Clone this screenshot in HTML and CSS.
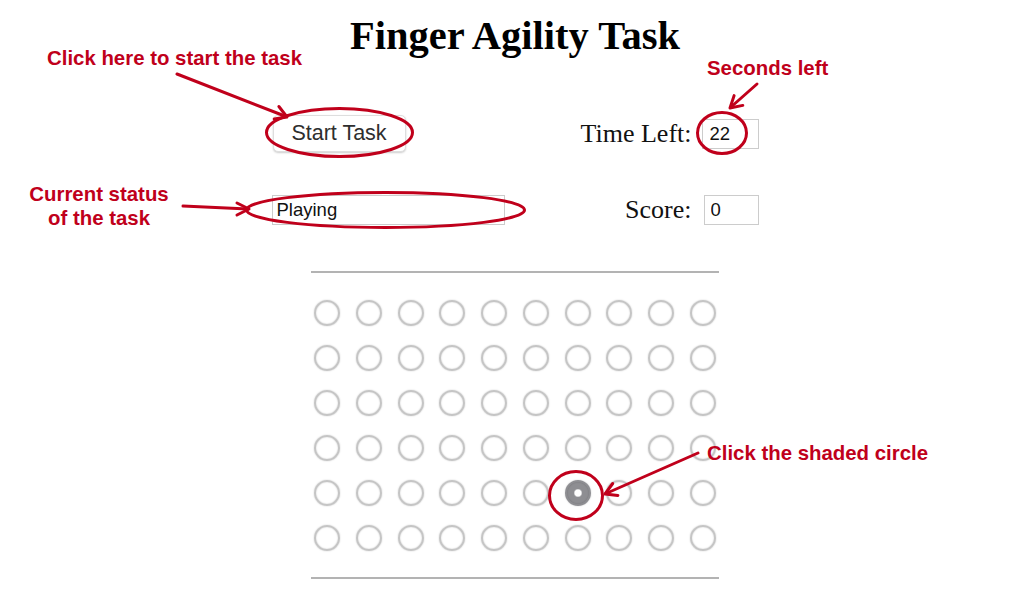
FILE: index.html
```html
<!DOCTYPE html>
<html lang="en">
<head>
<meta charset="utf-8">
<title>Finger Agility Task</title>
<link rel="stylesheet" href="styles.css">
</head>
<body>
<main class="page">
  <h1 class="title">Finger Agility Task</h1>
  <div class="controls">
    <div class="cell"><button class="start-btn" type="button">Start Task</button></div>
    <label class="lbl" for="time">Time Left:</label>
    <div class="cell-right"><input id="time" class="field time" value="22" readonly></div>
    <div class="cell"><input class="status" value="Playing" readonly></div>
    <label class="lbl" for="score">Score:</label>
    <div class="cell-right"><input id="score" class="field score" value="0" readonly></div>
  </div>
  <div class="rule"></div>
  <div class="board">
    <span class="dot"></span><span class="dot"></span><span class="dot"></span><span class="dot"></span><span class="dot"></span><span class="dot"></span><span class="dot"></span><span class="dot"></span><span class="dot"></span><span class="dot"></span>
    <span class="dot"></span><span class="dot"></span><span class="dot"></span><span class="dot"></span><span class="dot"></span><span class="dot"></span><span class="dot"></span><span class="dot"></span><span class="dot"></span><span class="dot"></span>
    <span class="dot"></span><span class="dot"></span><span class="dot"></span><span class="dot"></span><span class="dot"></span><span class="dot"></span><span class="dot"></span><span class="dot"></span><span class="dot"></span><span class="dot"></span>
    <span class="dot"></span><span class="dot"></span><span class="dot"></span><span class="dot"></span><span class="dot"></span><span class="dot"></span><span class="dot"></span><span class="dot"></span><span class="dot"></span><span class="dot"></span>
    <span class="dot"></span><span class="dot"></span><span class="dot"></span><span class="dot"></span><span class="dot"></span><span class="dot"></span><span class="dot active"></span><span class="dot"></span><span class="dot"></span><span class="dot"></span>
    <span class="dot"></span><span class="dot"></span><span class="dot"></span><span class="dot"></span><span class="dot"></span><span class="dot"></span><span class="dot"></span><span class="dot"></span><span class="dot"></span><span class="dot"></span>
  </div>
  <div class="rule"></div>
</main>

<div class="notes">
  <svg class="marks" width="1019" height="596" viewBox="0 0 1019 596" fill="none" stroke="#c0001b" stroke-width="3" stroke-linecap="round" stroke-linejoin="round">
    <ellipse cx="339.5" cy="132.5" rx="73" ry="24"/>
    <ellipse cx="385.5" cy="210" rx="139" ry="17.5"/>
    <ellipse cx="722" cy="133" rx="24.5" ry="20.5"/>
    <ellipse cx="576" cy="495.5" rx="26.5" ry="24"/>
    <line x1="177" y1="74" x2="286" y2="116.5"/>
    <polyline points="278.9,106.5 287,117 274.2,119"/>
    <line x1="183" y1="206" x2="248" y2="209"/>
    <polyline points="237,203 249,209 237,215"/>
    <line x1="757" y1="84" x2="731" y2="107"/>
    <polyline points="742.8,105.4 730,108 734.1,95.6"/>
    <line x1="698" y1="453" x2="606" y2="493.5"/>
    <polyline points="612.7,483.5 605,494 617.9,495.4"/>
  </svg>
  <div class="note note-start">Click here to start the task</div>
  <div class="note note-seconds">Seconds left</div>
  <div class="note note-status">Current status<br>of the task</div>
  <div class="note note-circle">Click the shaded circle</div>
</div>
</body>
</html>
```

FILE: styles.css
```css
html, body {
  margin: 0;
  padding: 0;
  background: #ffffff;
}

body {
  position: relative;
  width: 1019px;
  height: 596px;
  overflow: hidden;
  font-family: "Liberation Serif", "Times New Roman", serif;
  color: #000;
}

.page {
  box-sizing: border-box;
  width: 1019px;
  padding: 12px 0 0 11px;
  display: flex;
  flex-direction: column;
  align-items: center;
}

.title {
  margin: 0;
  font-family: "Liberation Serif", "Times New Roman", serif;
  font-weight: bold;
  font-size: 40.5px;
  line-height: 48px;
  color: #000;
}

.controls {
  margin-top: 55px;
  display: grid;
  grid-template-columns: 233px 187px 67px;
  grid-template-rows: 37px 30px;
  row-gap: 43px;
  align-items: center;
}

.cell {
  display: flex;
  align-items: center;
}

.cell-right {
  display: flex;
  justify-content: flex-end;
  align-items: center;
}

.start-btn {
  box-sizing: border-box;
  width: 133px;
  height: 37px;
  margin-left: 1px;
  padding: 0;
  background: #ffffff;
  border: 1px solid #dedede;
  border-radius: 5px;
  box-shadow: 0 1px 2px rgba(0, 0, 0, 0.2);
  font-family: "Liberation Sans", Arial, sans-serif;
  font-size: 21.5px;
  color: #2e2e2e;
}

.status,
.field {
  box-sizing: border-box;
  height: 30px;
  margin: 0;
  border: 1px solid #cccccc;
  border-radius: 0;
  background: #fff;
  font-family: "Liberation Sans", Arial, sans-serif;
  font-size: 18.5px;
  color: #111;
  outline: none;
}

.status {
  width: 233px;
  padding: 0 0 0 4px;
}

.field {
  padding: 0 0 0 7px;
}

.time {
  width: 57px;
}

.score {
  width: 55px;
  padding-left: 6px;
}

.lbl {
  font-family: "Liberation Serif", "Times New Roman", serif;
  font-size: 26px;
  line-height: 30px;
  text-align: right;
  color: #111;
}

.rule {
  width: 408px;
  height: 2px;
  background: #b3b3b3;
}

.controls + .rule {
  margin-top: 46px;
}

.board {
  margin: 27px 0 26px;
  display: grid;
  grid-template-columns: repeat(10, 26px);
  grid-auto-rows: 26px;
  column-gap: 15.74px;
  row-gap: 19.1px;
}

.dot {
  box-sizing: border-box;
  width: 26px;
  height: 26px;
  border-radius: 50%;
  border: 2px solid #c5c5c5;
  box-shadow: 0 0 1.5px rgba(0, 0, 0, 0.25), inset 0 0 1.5px rgba(0, 0, 0, 0.25);
}

.dot.active {
  border-color: #8e8e92;
  background: radial-gradient(circle, #ffffff 0 3px, #8e8e92 4.5px);
}

.notes {
  position: absolute;
  top: 0;
  left: 0;
  width: 1019px;
  height: 596px;
  pointer-events: none;
}

.marks {
  position: absolute;
  top: 0;
  left: 0;
}

.note {
  position: absolute;
  font-family: "Liberation Sans", Arial, sans-serif;
  font-weight: bold;
  font-size: 20.4px;
  line-height: 24px;
  color: #c0001b;
  white-space: nowrap;
}

.note-start {
  left: 47px;
  top: 46px;
}

.note-seconds {
  left: 707px;
  top: 56px;
}

.note-status {
  left: 1px;
  top: 182px;
  width: 196px;
  text-align: center;
}

.note-circle {
  left: 707px;
  top: 441px;
}
```
